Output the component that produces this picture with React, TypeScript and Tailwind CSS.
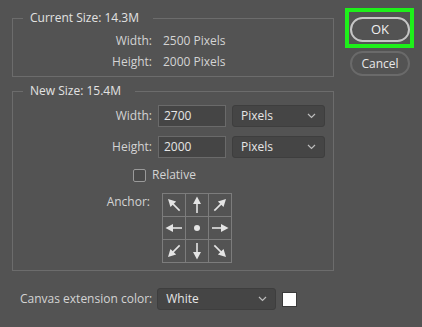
import React from 'react';

const Chevron: React.FC = () => (
  <svg width="9" height="6" viewBox="0 0 9 6" className="shrink-0">
    <polyline points="1,1 4.5,4.5 8,1" fill="none" stroke="#bdbdbd" strokeWidth="1.2" />
  </svg>
);

const Select: React.FC<{ value: string; width: string }> = ({ value, width }) => (
  <div
    className={`${width} h-[22px] flex items-center justify-between pl-[8px] pr-[8px] bg-[#454545] border border-[#3e3e3e] rounded-[3px] text-[#e6e6e6]`}
  >
    <span>{value}</span>
    <Chevron />
  </div>
);

const Arrow: React.FC<{ angle: number }> = ({ angle }) => (
  <svg width="22" height="22" viewBox="0 0 22 22">
    <g transform={`rotate(${angle} 11 11)`}>
      <line x1="11" y1="19" x2="11" y2="8" stroke="#e4e4e4" strokeWidth="1.6" />
      <polygon points="11,2.5 7,10 15,10" fill="#e4e4e4" />
    </g>
  </svg>
);

const anchors: (number | null)[] = [-45, 0, 45, -90, null, 90, -135, 180, 135];

const App: React.FC = () => {
  return (
    <div className="w-[422px] h-[327px] bg-[#535353] flex text-[12px] leading-[16px] text-[#d4d4d4] font-['Open_Sans',sans-serif] overflow-hidden">
      <div className="w-[322px] ml-[12px] pt-[10px]">
        <fieldset className="border border-[#6c6c6c] pt-[4px] pb-[4px]">
          <legend className="ml-[10px] pl-[7px] pr-[14px] text-[#e2e2e2]">Current Size: 14.3M</legend>
          {[
            ['Width:', '2500 Pixels'],
            ['Height:', '2000 Pixels'],
          ].map(([label, value]) => (
            <div key={label} className="flex items-center h-[21px]">
              <span className="w-[139px] text-right">{label}</span>
              <span className="ml-[11px]">{value}</span>
            </div>
          ))}
        </fieldset>

        <fieldset className="mt-[6px] border border-[#6c6c6c] pt-[6px] pb-[7px]">
          <legend className="ml-[10px] pl-[7px] pr-[14px] text-[#e2e2e2]">New Size: 15.4M</legend>
          <div className="flex flex-col gap-[9px]">
            {[
              ['Width:', '2700'],
              ['Height:', '2000'],
            ].map(([label, value]) => (
              <div key={label} className="flex items-center">
                <span className="w-[139px] text-right">{label}</span>
                <div className="ml-[6px] w-[68px] h-[22px] flex items-center pl-[5px] bg-[#454545] border border-[#6a6a6a] text-[#e6e6e6]">
                  {value}
                </div>
                <div className="ml-[6px]">
                  <Select value="Pixels" width="w-[93px]" />
                </div>
              </div>
            ))}
          </div>

          <div className="flex items-center h-[20px] mt-[7px] pl-[120px]">
            <div className="w-[13px] h-[13px] border border-[#9a9a9a] rounded-[2px] bg-[#4a4a4a]" />
            <span className="ml-[6px]">Relative</span>
          </div>

          <div className="flex mt-[8px]">
            <span className="w-[137px] text-right mt-[1px]">Anchor:</span>
            <div className="ml-[12px] grid grid-cols-3 border-t border-l border-[#7c7c7c]">
              {anchors.map((a, i) => (
                <div key={i} className="w-[23px] h-[23px] border-r border-b border-[#7c7c7c] flex items-center justify-center">
                  {a === null ? (
                    <div className="w-[6px] h-[6px] rounded-full bg-[#e4e4e4]" />
                  ) : (
                    <Arrow angle={a} />
                  )}
                </div>
              ))}
            </div>
          </div>
        </fieldset>

        <div className="flex items-center mt-[17px] ml-[8px]">
          <span>Canvas extension color:</span>
          <div className="ml-[5px]">
            <Select value="White" width="w-[119px]" />
          </div>
          <div className="ml-[6px] w-[15px] h-[15px] bg-white border border-[#3a3a3a]" />
        </div>
      </div>

      <div className="ml-[11px] pt-[8px] flex flex-col">
        <div className="w-[69px] h-[40px] border-[4px] border-[#1ef01a] pl-[1px] pt-[5px]">
          <button className="w-[60px] h-[25px] rounded-full border-2 border-[#c6c6c6] text-[#f0f0f0] text-[13px] leading-none">
            OK
          </button>
        </div>
        <button className="mt-[3px] ml-[5px] w-[60px] h-[25px] rounded-full border-2 border-[#6a6a6a] text-[#e8e8e8] text-[12px] leading-none">
          Cancel
        </button>
      </div>
    </div>
  );
};

export default App;
